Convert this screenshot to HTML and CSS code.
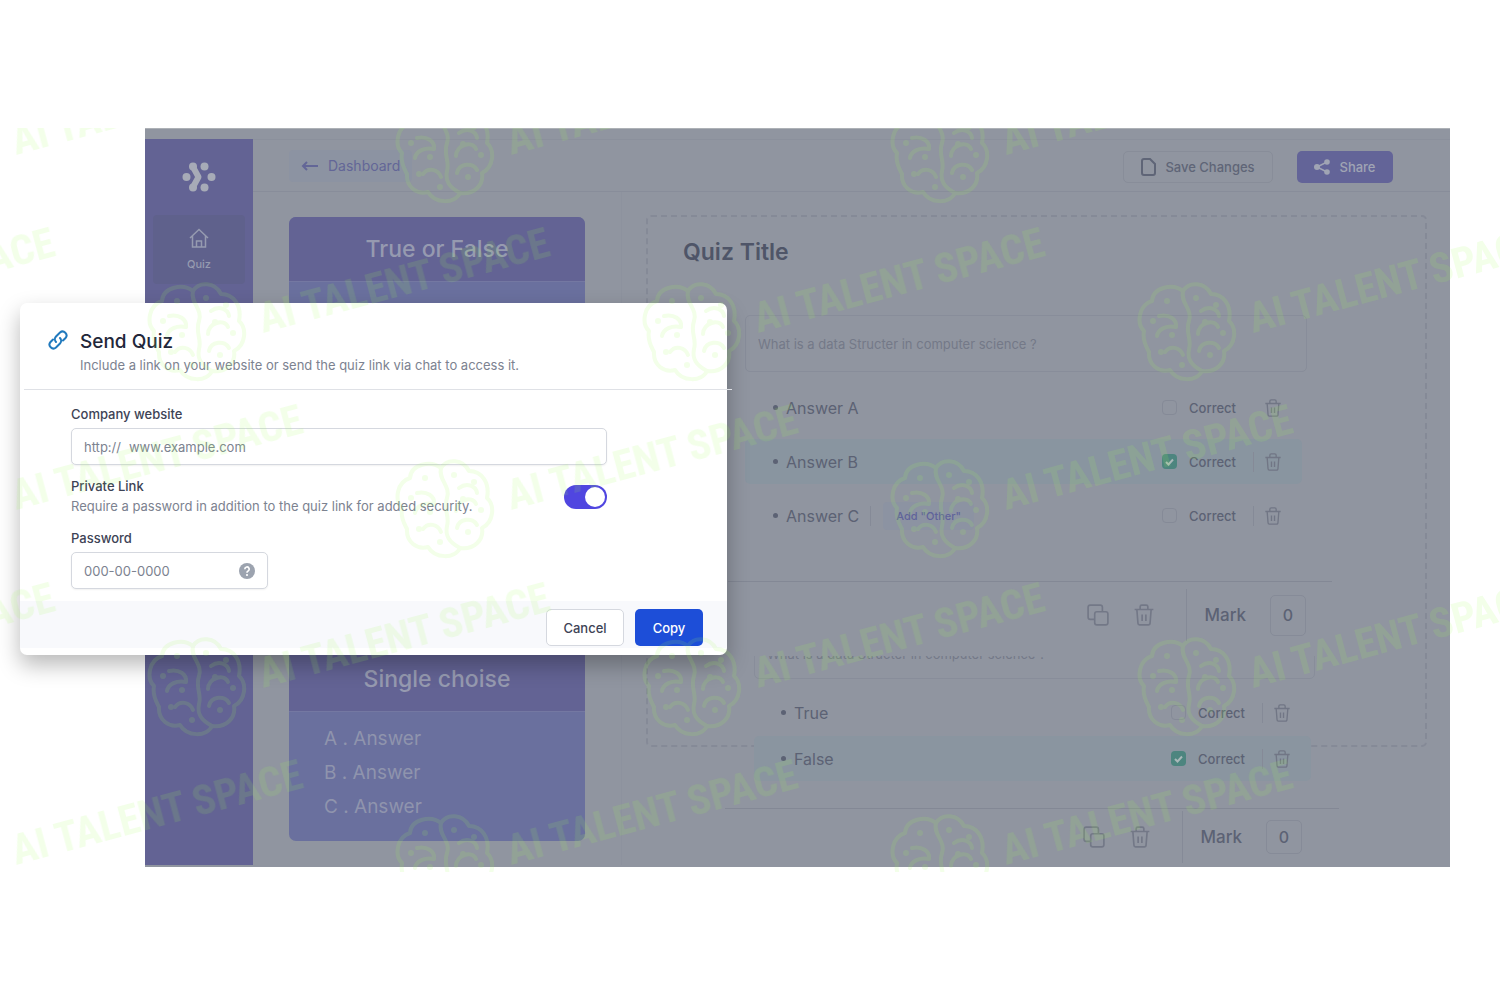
FILE: index.html
```
<!DOCTYPE html>
<html lang="en">
<head>
  <meta charset="UTF-8" />
  <meta name="viewport" content="width=device-width, initial-scale=1.0" />
  <title>Quiz Builder</title>
  <link rel="stylesheet" href="styles.css">
</head>
<body>
  <!-- Shared icons -->
  <svg class="defs" width="0" height="0" aria-hidden="true">
    <symbol id="trash" viewBox="0 0 20 20">
      <path d="M1.5 5h17M3.5 5l1 12.5a1.5 1.5 0 0 0 1.5 1.5h8a1.5 1.5 0 0 0 1.5-1.5L16.5 5M6.5 5V2.5A1.5 1.5 0 0 1 8 1h4a1.5 1.5 0 0 1 1.5 1.5V5M8.3 9.5v6M11.7 9.5v6" fill="none" stroke="currentColor" stroke-width="1.5" />
    </symbol>
    <symbol id="copy" viewBox="0 0 20 20">
      <rect x="7" y="7" width="12" height="12" rx="2" fill="none" stroke="currentColor" stroke-width="1.5" />
      <path d="M6.5 14H3a2 2 0 0 1-2-2V3a2 2 0 0 1 2-2h9a2 2 0 0 1 2 2v3.5" fill="none" stroke="currentColor" stroke-width="1.5" />
    </symbol>
    <symbol id="brain" viewBox="-50 -52 100 104">
      <g fill="none" stroke="currentColor" stroke-width="4" stroke-linecap="round" stroke-linejoin="round">
        <path d="M-4-40C-14-48-34-44-35-30C-48-26-51-8-43 0C-45 10-40 17-38 21C-39 34-28 42-17 39C-10 51 10 51 15 40C29 42 39 32 37 20C49 14 50-3 42-10C45-25 37-37 24-37C18-49 2-50-4-40Z" />
        <path d="M-4-40C-7-28 6-22 2-10C-2 2 5 8 2 18C0 28 4 34 15 40M-28-15C-18-17-10-12-11-4M-11-4C-20-6-29-2-30 5M-22 21C-17 14-7 16-4 24M14-20C22-26 31-22 32-15M11 3C11-8 27-13 31-4M12 20C14 10 28 9 32 17" />
      </g>
      <g fill="currentColor">
        <circle cx="-20" cy="-30" r="3" /><circle cx="9" cy="-33" r="3" /><circle cx="29" cy="-26" r="3" />
        <circle cx="-34" cy="-10" r="3" /><circle cx="18" cy="-9" r="3" /><circle cx="36" cy="2" r="3" />
        <circle cx="-15" cy="4" r="3" /><circle cx="-26" cy="21" r="3" /><circle cx="23" cy="24" r="3" /><circle cx="-5" cy="34" r="3" />
      </g>
    </symbol>
    <g id="mark">
      <use href="#brain" x="-52" y="-54" width="100" height="104" />
      <text class="mark-text" x="0" y="0" transform="translate(64 0) rotate(-15)">AI TALENT SPACE</text>
    </g>
    <g id="mark-row">
      <use href="#mark" x="-495" /><use href="#mark" /><use href="#mark" x="495" /><use href="#mark" x="990" />
    </g>
  </svg>

  <div class="app">
    <nav class="sidebar">
      <svg class="logo" width="34" height="30" viewBox="0 0 34 30" aria-hidden="true">
        <g fill="currentColor">
          <circle cx="4.500" cy="15" r="4" /><circle cx="29.500" cy="15" r="4" />
          <circle cx="22.500" cy="4.500" r="4" /><circle cx="22.500" cy="25.500" r="4" />
          <circle cx="11" cy="4.500" r="4" /><circle cx="11" cy="25.500" r="4" />
        </g>
        <path d="M11 5L16.500 15L11 25" fill="none" stroke="currentColor" stroke-width="6" stroke-linejoin="round" />
      </svg>
      <a class="nav-item" href="#quiz">
        <svg width="20" height="20" viewBox="0 0 20 20" fill="none" stroke="currentColor" stroke-width="1.5" aria-hidden="true">
          <path d="M1 10L10 1.500L19 10M3.500 8v11h13V8M7.500 19v-6h5v6" />
        </svg>
        <span>Quiz</span>
      </a>
    </nav>

    <div class="page">
      <header class="topbar">
        <a class="back" href="#dashboard">
          <svg width="18" height="12" viewBox="0 0 18 12" fill="none" stroke="currentColor" stroke-width="2" aria-hidden="true"><path d="M17 6H2M6 2L2 6l4 4" /></svg>
          Dashboard
        </a>
        <div class="actions">
          <button class="btn-save" type="button">
            <svg width="15" height="18" viewBox="0 0 15 18" fill="none" stroke="currentColor" stroke-width="2" aria-hidden="true"><path d="M3 1h6l5 5v9a2 2 0 0 1-2 2H3a2 2 0 0 1-2-2V3a2 2 0 0 1 2-2z" /></svg>
            Save Changes
          </button>
          <button class="btn-share" type="button">
            <svg width="16" height="16" viewBox="0 0 16 16" fill="currentColor" aria-hidden="true">
              <path d="M13 3L3 8l10 5" fill="none" stroke="currentColor" stroke-width="1.5" />
              <circle cx="3" cy="8" r="3" /><circle cx="13" cy="3" r="2.800" /><circle cx="13" cy="13" r="2.800" />
            </svg>
            Share
          </button>
        </div>
      </header>

      <div class="workspace">
        <aside class="types">
          <section class="type-card">
            <h2>True or False</h2>
            <div class="type-body"></div>
          </section>
          <section class="type-card">
            <h2>Single choise</h2>
            <div class="type-body">
              <p>A . Answer</p>
              <p>B . Answer</p>
              <p>C . Answer</p>
            </div>
          </section>
        </aside>

        <main class="canvas">
          <div class="frame"></div>
          <h1>Quiz Title</h1>

          <section class="question">
            <input class="question-text" type="text" aria-label="Question 1" value="What is a data Structer in computer science ?">
            <ul class="answers">
              <li>
                <span class="answer">Answer A</span>
                <label><input type="checkbox"> Correct</label>
                <button class="icon-btn plain" type="button" aria-label="Delete"><svg width="18" height="18"><use href="#trash" /></svg></button>
              </li>
              <li class="right">
                <span class="answer">Answer B</span>
                <label><input type="checkbox" checked> Correct</label>
                <button class="icon-btn" type="button" aria-label="Delete"><svg width="18" height="18"><use href="#trash" /></svg></button>
              </li>
              <li>
                <span class="answer">Answer C</span>
                <span class="divider"></span>
                <button class="add-other" type="button">Add "Other"</button>
                <label><input type="checkbox"> Correct</label>
                <button class="icon-btn" type="button" aria-label="Delete"><svg width="18" height="18"><use href="#trash" /></svg></button>
              </li>
            </ul>
            <div class="tools">
              <button type="button" aria-label="Duplicate"><svg width="22" height="22"><use href="#copy" /></svg></button>
              <button type="button" aria-label="Delete"><svg width="22" height="22"><use href="#trash" /></svg></button>
              <label class="mark">Mark <input type="text" value="0"></label>
            </div>
          </section>

          <section class="question second">
            <div class="question-clip">
              <input class="question-text" type="text" aria-label="Question 2" value="What is a data Structer in computer science ?">
            </div>
            <ul class="answers">
              <li>
                <span class="answer">True</span>
                <label><input type="checkbox"> Correct</label>
                <button class="icon-btn" type="button" aria-label="Delete"><svg width="18" height="18"><use href="#trash" /></svg></button>
              </li>
              <li class="right">
                <span class="answer">False</span>
                <label><input type="checkbox" checked> Correct</label>
                <button class="icon-btn" type="button" aria-label="Delete"><svg width="18" height="18"><use href="#trash" /></svg></button>
              </li>
            </ul>
            <div class="tools">
              <button type="button" aria-label="Duplicate"><svg width="22" height="22"><use href="#copy" /></svg></button>
              <button type="button" aria-label="Delete"><svg width="22" height="22"><use href="#trash" /></svg></button>
              <label class="mark">Mark <input type="text" value="0"></label>
            </div>
          </section>
        </main>
      </div>
    </div>
  </div>

  <!-- Send quiz dialog -->
  <form class="modal" role="dialog" aria-labelledby="modal-title">
    <div class="modal-head">
      <svg width="20" height="20" viewBox="0 0 20 20" fill="none" stroke="currentColor" stroke-width="2" stroke-linecap="round" aria-hidden="true">
        <path d="M8 12a4 4 0 0 1 0-5.500l4-4a3.900 3.900 0 0 1 5.500 5.500l-2.500 2.500" />
        <path d="M12 8a4 4 0 0 1 0 5.500l-4 4a3.900 3.900 0 0 1-5.500-5.500L5 9.500" />
      </svg>
      <div>
        <h2 id="modal-title">Send Quiz</h2>
        <p>Include a link on your website or send the quiz link via chat to access it.</p>
      </div>
    </div>
    <div class="modal-body">
      <label for="website">Company website</label>
      <div class="field">
        <span>http://</span>
        <input id="website" type="text" placeholder="www.example.com">
      </div>
      <div class="private">
        <div>
          <label for="private">Private Link</label>
          <p>Require a password in addition to the quiz link for added security.</p>
        </div>
        <input id="private" class="switch" type="checkbox" checked>
      </div>
      <label for="password">Password</label>
      <div class="field short">
        <input id="password" type="text" placeholder="000-00-0000">
        <svg width="16" height="16" viewBox="0 0 16 16" aria-hidden="true">
          <circle cx="8" cy="8" r="8" fill="#9ca3af" />
          <path d="M5.800 6.200a2.200 2.200 0 1 1 3.300 1.900c-.8.400-1.100.8-1.100 1.600" fill="none" stroke="#fff" stroke-width="1.700" />
          <circle cx="8" cy="12" r="1.100" fill="#fff" />
        </svg>
      </div>
    </div>
    <div class="modal-foot">
      <button class="btn-cancel" type="button">Cancel</button>
      <button class="btn-copy" type="button">Copy</button>
    </div>
  </form>

  <!-- Watermark over the whole page -->
  <svg class="watermark" aria-hidden="true">
    <use href="#mark-row" x="-48" y="27" />
    <use href="#mark-row" x="199" y="205" />
    <use href="#mark-row" x="-48" y="382" />
    <use href="#mark-row" x="199" y="560" />
    <use href="#mark-row" x="-48" y="737" />
  </svg>
</body>
</html>
```

FILE: styles.css
```
* {
  box-sizing: border-box;
}
body {
  position: relative;
  margin: 0;
  padding: 128px 50px 128px 145px;
  background: #fff;
  font-family: Inter, "Liberation Sans", sans-serif;
  font-size: 13px;
  color: #5c6274;
}
h1, h2, p, ul {
  margin: 0;
  padding: 0;
  font-weight: 500;
}
button, input {
  font: inherit;
  color: inherit;
}
button {
  padding: 0;
  border: 0;
  background: none;
}
input {
  min-width: 0;
  outline: 0;
}
a {
  text-decoration: none;
}
svg {
  flex: none;
}
.defs {
  position: absolute;
}

/* App shell */
.app {
  display: flex;
  padding: 10px 0 2px;
  background: #9095a0;
  border-top: 1px solid #adb1b6;
}
.sidebar {
  width: 108px;
  padding: 23px 8px;
  background: #636394;
  color: #a7abb7;
}
.logo {
  display: block;
  margin: 0 auto 23px;
}
.nav-item {
  display: flex;
  flex-direction: column;
  align-items: center;
  gap: 9px;
  height: 69px;
  padding-top: 13px;
  border-radius: 4px;
  background: #5f618c;
  color: #969bb0;
  font-size: 11px;
  font-weight: 500;
}
.page {
  flex: 1;
  min-width: 0;
  display: flex;
  flex-direction: column;
}
.topbar {
  display: flex;
  justify-content: space-between;
  align-items: center;
  height: 53px;
  padding: 0 57px 0 36px;
  border-top: 1px solid #8b909c;
  border-bottom: 1px solid #888d9a;
}
.back {
  display: flex;
  align-items: center;
  gap: 9px;
  height: 32px;
  padding: 0 12px;
  border-radius: 4px;
  background: #8c93a2;
  color: #636697;
  font-size: 14px;
}
.actions {
  display: flex;
  gap: 24px;
  padding-top: 2px;
  font-weight: 500;
}
.btn-save, .btn-share {
  display: flex;
  align-items: center;
  justify-content: center;
  gap: 9px;
  height: 32px;
  border-radius: 5px;
}
.btn-save {
  width: 150px;
  border: 1px solid #888d99;
  color: #5f6577;
}
.btn-share {
  width: 96px;
  background: #636498;
  color: #a0a4b4;
}

.workspace {
  flex: 1;
  display: flex;
}
.types {
  display: flex;
  flex-direction: column;
  justify-content: space-between;
  width: 369px;
  padding: 25px 36px 24px;
  border-right: 1px solid #8d929e;
}
.type-card {
  border-radius: 7px;
  overflow: hidden;
  background: #6a709e;
  color: #8f94ad;
}
.type-card h2 {
  border-bottom: 1px solid #7478a2;
  background: #636394;
  color: #969ab0;
  font-size: 23px;
  line-height: 64px;
  text-align: center;
}
.type-body {
  min-height: 129px;
  padding: 10px 35px;
  font-size: 19px;
  line-height: 34px;
}
.type-body p {
  font-weight: 400;
}

/* Quiz canvas */
.canvas {
  position: relative;
  flex: 1;
  padding: 23px 23px 0 24px;
}
.frame {
  position: absolute;
  top: 23px;
  left: 24px;
  right: 23px;
  height: 532px;
  border: 2px dashed #858a97;
  border-radius: 5px;
}
.canvas h1 {
  position: relative;
  padding: 22px 37px 0;
  color: #4f5568;
  font-size: 23px;
  font-weight: 600;
  line-height: 30px;
}
.question {
  position: relative;
  margin: 48px 95px 0 82px;
}
.question-text {
  display: block;
  width: calc(100% - 42px);
  height: 57px;
  margin-left: 17px;
  padding: 0 12px;
  border: 1px solid #888d9a;
  border-radius: 5px;
  background: none;
  color: #747988;
}
.answers {
  display: flex;
  flex-direction: column;
  gap: 9px;
  padding: 13px 30px 43px 17px;
  list-style: none;
}
.answers li {
  display: flex;
  align-items: center;
  height: 45px;
  padding: 0 20px 0 28px;
  border-radius: 5px;
  font-weight: 400;
}
.answers li.right {
  background: #8995a0;
}
.answer {
  display: flex;
  align-items: center;
  gap: 8px;
  font-size: 16px;
}
.answer::before {
  content: "";
  width: 5px;
  height: 5px;
  border-radius: 50%;
  background: #5c6274;
}
.answers label {
  display: flex;
  align-items: center;
  gap: 12px;
  margin-left: auto;
  font-weight: 500;
}
.answers input {
  appearance: none;
  width: 15px;
  height: 15px;
  margin: 0;
  border: 1px solid #858a97;
  border-radius: 4px;
}
.answers input:checked {
  border: 0;
  background: #4d857f url("data:image/svg+xml,%3Csvg xmlns='http://www.w3.org/2000/svg' viewBox='0 0 15 15'%3E%3Cpath d='M4 8l2.5 2.5L11 5.5' fill='none' stroke='%23a9b8b9' stroke-width='2'/%3E%3C/svg%3E");
}
.icon-btn {
  display: flex;
  align-items: center;
  height: 20px;
  margin-left: 17px;
  padding-left: 10px;
  border-left: 1px solid #858a97;
  color: #717685;
}
.icon-btn.plain {
  border-color: transparent;
}
.divider {
  width: 1px;
  height: 20px;
  margin: 0 12px 0 11px;
  background: #858a97;
}
.add-other {
  height: 28px;
  padding: 0 13px;
  border-radius: 4px;
  background: #8c93a2;
  color: #60639a;
  font-size: 11px;
  font-weight: 500;
}
.tools {
  display: flex;
  align-items: center;
  justify-content: flex-end;
  gap: 24px;
  height: 67px;
  padding-right: 26px;
  border-top: 1px solid #838895;
  color: #737887;
}
.tools button {
  display: flex;
}
.mark {
  display: flex;
  align-items: center;
  gap: 24px;
  height: 52px;
  margin-left: 7px;
  padding-left: 17px;
  border-left: 1px solid #858a97;
  color: #5c6274;
  font-size: 17px;
  font-weight: 500;
}
.mark input {
  width: 36px;
  height: 41px;
  padding: 0;
  border: 1px solid #868b98;
  border-radius: 5px;
  background: none;
  font-size: 16px;
  text-align: center;
}
.question.second {
  margin: 8px 88px 0 79px;
}
.question-clip {
  display: flex;
  align-items: flex-end;
  height: 23px;
  margin: 0 24px 0 29px;
  overflow: hidden;
}
.second .question-text {
  flex: none;
  width: 100%;
  height: 51px;
  margin: 0;
}
.second .answers {
  gap: 1px;
  padding: 11px 28px 27px 29px;
}
.second .answers li {
  padding-left: 27px;
}
.second .answers li.right {
  background: #8a95a0;
}
.second .tools {
  height: 57px;
  padding-right: 37px;
}
.second .mark input {
  height: 34px;
}

/* Dialog */
.modal {
  position: absolute;
  top: 303px;
  left: 20px;
  width: 707px;
  padding-bottom: 7px;
  border-radius: 7px;
  background: #fff;
  box-shadow: 0 10px 22px rgba(0, 0, 0, 0.28);
  color: #7c8290;
}
.modal-head {
  display: flex;
  gap: 12px;
  margin: 0 -5px 0 4px;
  padding: 27px 24px 14px;
  border-bottom: 1px solid #dfe1e6;
}
.modal-head svg {
  color: #2079bd;
}
.modal-head h2 {
  color: #22273a;
  font-size: 19px;
  line-height: 24px;
}
.modal p {
  font-weight: 400;
  line-height: 20px;
}
.modal-head p {
  padding-top: 1px;
}
.modal-body {
  padding: 15px 120px 12px 51px;
}
.modal-body label {
  display: block;
  color: #3d4355;
  font-weight: 500;
  line-height: 19px;
}
.field {
  display: flex;
  align-items: center;
  gap: 8px;
  height: 37px;
  margin-top: 4px;
  padding: 0 12px;
  border: 1px solid #d5d8df;
  border-radius: 5px;
  background: #fff;
  box-shadow: 0 1px 2px rgba(0, 0, 0, 0.06);
}
.field input {
  flex: 1;
  padding: 0;
  border: 0;
  background: none;
}
.field input::placeholder {
  color: #7c8290;
  opacity: 1;
}
.field.short {
  width: 197px;
}
.private {
  display: flex;
  align-items: center;
  justify-content: space-between;
  margin: 12px 0 13px;
}
.switch {
  appearance: none;
  display: flex;
  justify-content: flex-end;
  width: 43px;
  height: 24px;
  margin: 0;
  padding: 2px;
  border-radius: 12px;
  background: #5046e0;
}
.switch::after {
  content: "";
  width: 20px;
  height: 20px;
  border-radius: 50%;
  background: #fff;
}
.modal-foot {
  display: flex;
  justify-content: flex-end;
  gap: 11px;
  height: 47px;
  padding: 8px 24px 0;
  background: #f8f9fc;
}
.modal-foot button {
  height: 37px;
  border-radius: 5px;
  font-weight: 500;
}
.modal-foot .btn-cancel {
  width: 78px;
  border: 1px solid #d5d8df;
  background: #fff;
  color: #3d4355;
}
.modal-foot .btn-copy {
  width: 68px;
  background: #1d4ed8;
  color: #fff;
}

.watermark {
  position: absolute;
  top: 128px;
  left: 0;
  width: 100%;
  height: 744px;
  overflow: hidden;
  color: #a0ff56;
  fill: #a0ff56;
  opacity: 0.13;
  pointer-events: none;
}
.mark-text {
  font-family: "Liberation Sans Narrow", "Roboto Condensed", "Liberation Sans", sans-serif;
  font-size: 42px;
  font-weight: 700;
}
```
